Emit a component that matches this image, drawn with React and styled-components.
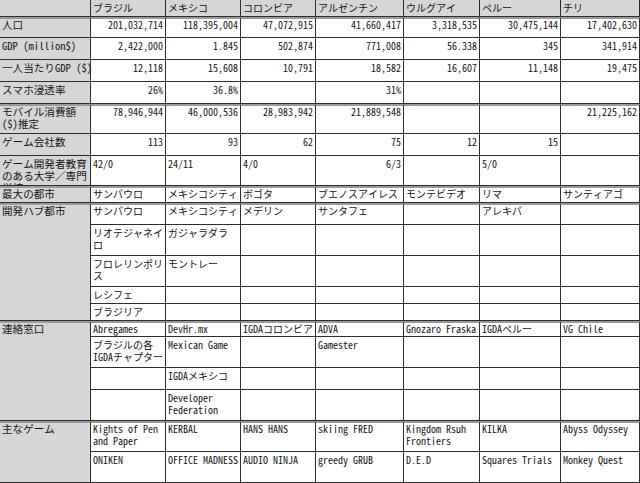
import React from "react";
import styled, { createGlobalStyle } from "styled-components";

const Global = createGlobalStyle`
  html, body { margin: 0; padding: 0; background: #ffffff; }
  #root { width: 640px; height: 483px; overflow: hidden; }
`;

const COLS = [91, 75, 75, 75, 88, 76, 81, 79];

const Sheet = styled.div`
  display: grid;
  width: 640px;
  grid-template-columns: ${COLS.map((c) => c + "px").join(" ")};
  grid-auto-rows: auto;
  font-family: "Noto Sans Mono CJK JP", "Noto Sans CJK JP", "DejaVu Sans Mono", monospace;
  color: #151515;
`;

const Cell = styled.div`
  box-sizing: border-box;
  overflow: hidden;
  background: ${(p) => (p.$grey ? "#d6d6d6" : "#ffffff")};
  border-right: 1px solid #2e2e2e;
  border-bottom: 1px solid #2e2e2e;
  border-top: ${(p) => (p.$sep ? "2px solid #9a9a9a" : "0")};
  padding: ${(p) => (p.$sep ? "0" : "2px")} 2px 0 2px;
  font-size: ${(p) => (p.$label ? "10.6px" : "10px")};
  line-height: 12px;
  text-align: ${(p) => (p.$right ? "right" : "left")};
  white-space: ${(p) => (p.$nowrap ? "nowrap" : "pre-wrap")};
  word-break: normal;
  overflow-wrap: anywhere;
  grid-row: ${(p) => (p.$span ? `span ${p.$span}` : "auto")};
`;

const rows = [
  { h: 17, header: true, label: "", cells: ["ブラジル", "メキシコ", "コロンビア", "アルゼンチン", "ウルグアイ", "ペルー", "チリ"] },
  { h: 21, sep: true, label: "人口", right: true, cells: ["201,032,714", "118,395,004", "47,072,915", "41,660,417", "3,318,535", "30,475,144", "17,402,630"] },
  { h: 22, label: "GDP (million$)", right: true, cells: ["2,422,000", "1.845", "502,874", "771,008", "56.338", "345", "341,914"] },
  { h: 22, label: "一人当たりGDP ($)", right: true, cells: ["12,118", "15,608", "10,791", "18,582", "16,607", "11,148", "19,475"] },
  { h: 22, label: "スマホ浸透率", right: true, cells: ["26%", "36.8%", "", "31%", "", "", ""] },
  { h: 30, sep: true, wrap: true, label: "モバイル消費額\n($)推定", right: true, cells: ["78,946,944", "46,000,536", "28,983,942", "21,889,548", "", "", "21,225,162"] },
  { h: 22, label: "ゲーム会社数", right: true, cells: ["113", "93", "62", "75", "12", "15", ""] },
  { h: 30, wrap: true, label: "ゲーム開発者教育のある大学／専門学校", cells: ["42/0", "24/11", "4/0", { t: "6/3", r: true }, "", "5/0", ""] },
  { h: 17, sep: true, label: "最大の都市", cells: ["サンパウロ", "メキシコシティ", "ボゴタ", "ブエノスアイレス", "モンテビデオ", "リマ", "サンティアゴ"] },
  { h: 22, sep: true, label: "開発ハブ都市", span: 5, cells: ["サンパウロ", "メキシコシティ", "メデリン", "サンタフェ", "", "アレキパ", ""] },
  { h: 31, cells: ["リオテジャネイロ", "ガジャラダラ", "", "", "", "", ""] },
  { h: 31, cells: ["フロレリンポリス", "モントレー", "", "", "", "", ""] },
  { h: 17, cells: ["レシフェ", "", "", "", "", "", ""] },
  { h: 17, cells: ["ブラジリア", "", "", "", "", "", ""] },
  { h: 16, sep: true, label: "連絡窓口", span: 4, cells: ["Abregames", "DevHr.mx", "IGDAコロンビア", "ADVA", "Gnozaro Fraska", "IGDAペルー", "VG Chile"] },
  { h: 31, cells: ["ブラジルの各IGDAチャプター", "Mexican Game", "", "Gamester", "", "", ""] },
  { h: 22, cells: ["", "IGDAメキシコ", "", "", "", "", ""] },
  { h: 31, cells: ["", "Developer Federation", "", "", "", "", ""] },
  { h: 31, sep: true, label: "主なゲーム", span: 2, cells: ["Kights of Pen and Paper", "KERBAL", "HANS HANS", "skiing FRED", "Kingdom Rsuh Frontiers", "KILKA", "Abyss Odyssey"] },
  { h: 31, cells: ["ONIKEN", "OFFICE MADNESS", "AUDIO NINJA", "greedy GRUB", "D.E.D", "Squares Trials", "Monkey Quest"] },
];

export default function App() {
  const template = rows.map((r) => r.h + "px").join(" ");
  const items = [];
  rows.forEach((row, ri) => {
    if (row.label !== undefined) {
      items.push(
        <Cell key={`l${ri}`} $grey $label $nowrap={!row.wrap} $sep={row.sep} $span={row.span}>
          {row.label}
        </Cell>
      );
    }
    row.cells.forEach((c, ci) => {
      const text = typeof c === "string" ? c : c.t;
      const right = typeof c === "string" ? row.right : c.r;
      items.push(
        <Cell key={`c${ri}-${ci}`} $grey={row.header} $sep={row.sep} $right={right}>
          {text}
        </Cell>
      );
    });
  });
  return (
    <>
      <Global />
      <Sheet style={{ gridTemplateRows: template }}>{items}</Sheet>
    </>
  );
}
